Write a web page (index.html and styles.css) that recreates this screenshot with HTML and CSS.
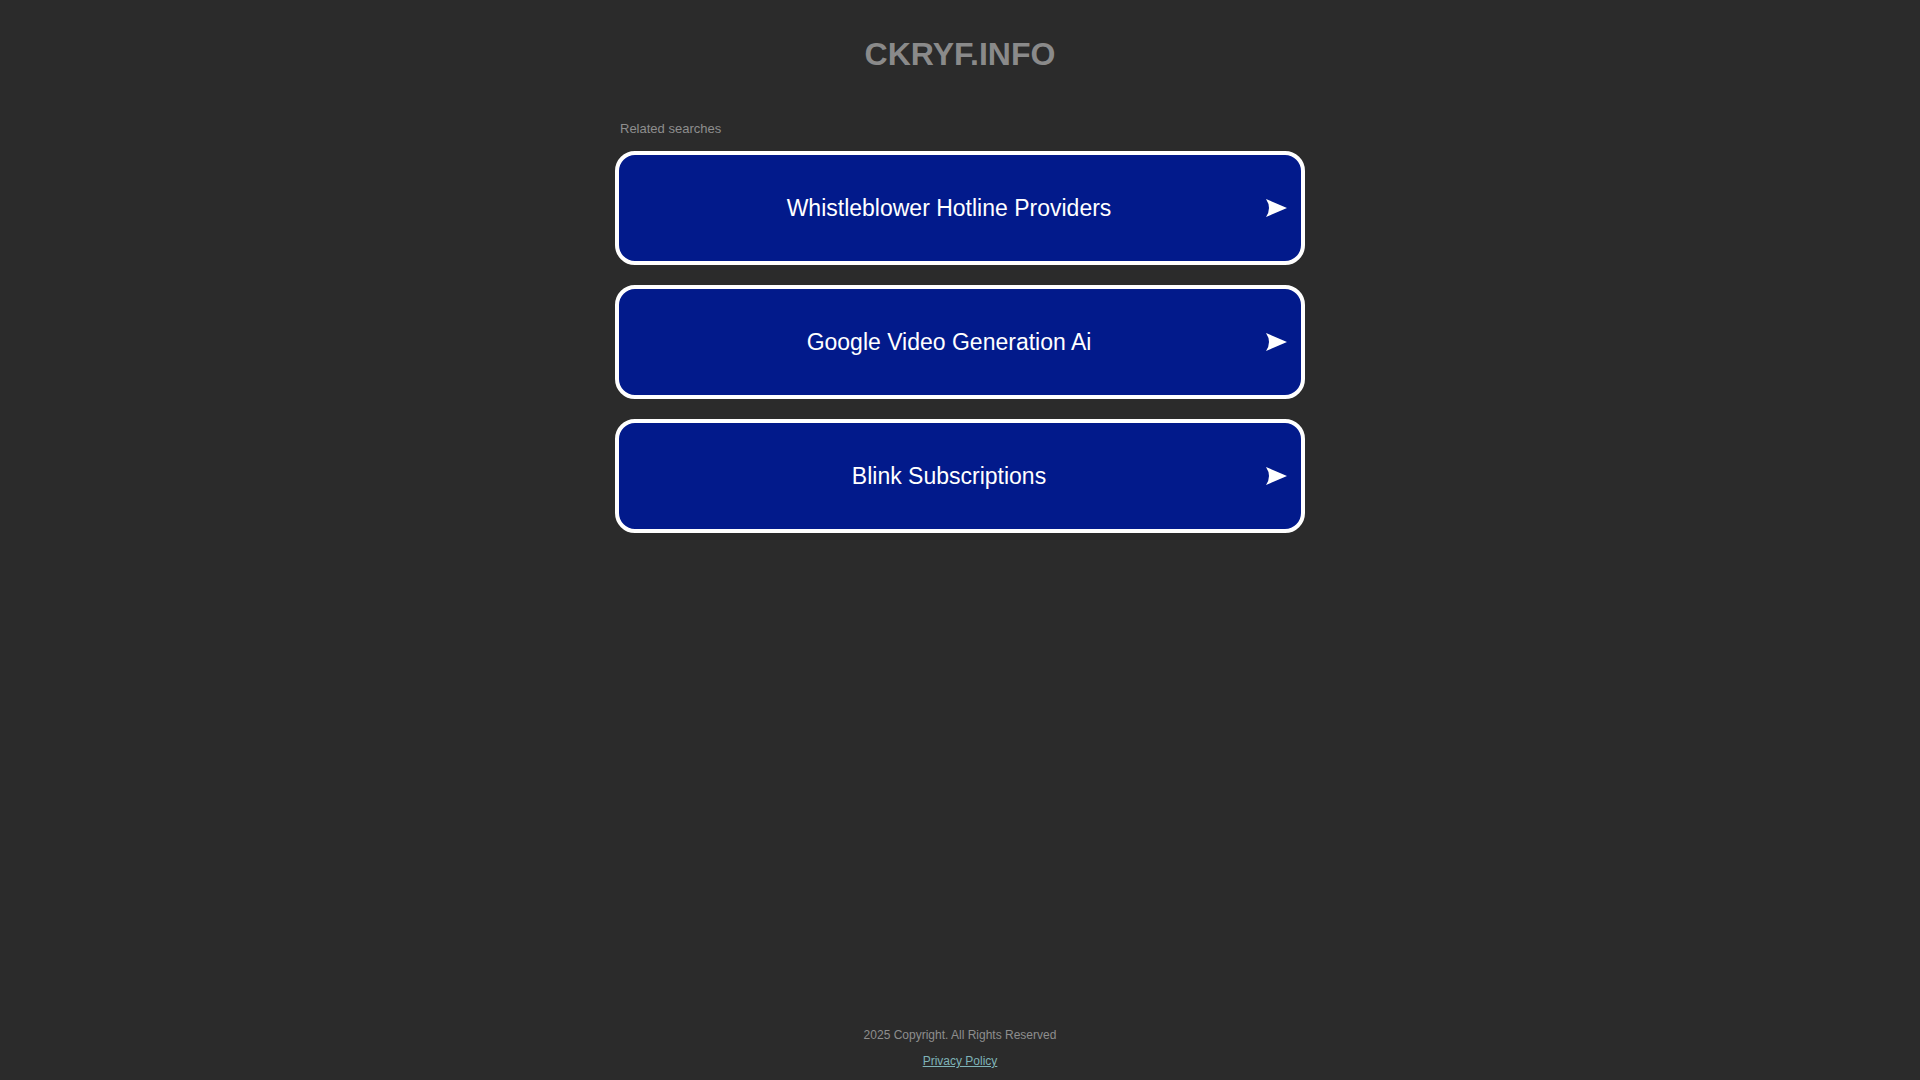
FILE: index.html
```html
<!DOCTYPE html>
<html lang="en">
<head>
<meta charset="utf-8">
<title>ckryf.info</title>
<link rel="stylesheet" href="styles.css">
</head>
<body>
<div class="page">
  <main class="main">
    <h1 class="domain">CKRYF.INFO</h1>
    <div class="related">
      <p class="related-title">Related searches</p>
      <ul class="links">
        <li><a class="link" href="#"><span class="link-text">Whistleblower Hotline Providers</span><svg class="arrow" viewBox="0 0 21 18" width="21" height="18"><path d="M0 0 L21 9 L0 18 Q6 9 0 0 Z" fill="#fff"/></svg></a></li>
        <li><a class="link" href="#"><span class="link-text">Google Video Generation Ai</span><svg class="arrow" viewBox="0 0 21 18" width="21" height="18"><path d="M0 0 L21 9 L0 18 Q6 9 0 0 Z" fill="#fff"/></svg></a></li>
        <li><a class="link" href="#"><span class="link-text">Blink Subscriptions</span><svg class="arrow" viewBox="0 0 21 18" width="21" height="18"><path d="M0 0 L21 9 L0 18 Q6 9 0 0 Z" fill="#fff"/></svg></a></li>
      </ul>
    </div>
  </main>
  <footer class="footer">
    <p class="copyright">2025 Copyright. All Rights Reserved</p>
    <a class="privacy" href="#">Privacy Policy</a>
  </footer>
</div>
</body>
</html>
```
FILE: styles.css
```css
html, body {
  margin: 0;
  padding: 0;
  background: #2b2b2b;
  font-family: "Liberation Sans", Arial, sans-serif;
}

.page {
  min-height: 100vh;
  display: flex;
  flex-direction: column;
  align-items: center;
}

.main {
  width: 690px;
  flex: 1;
  display: flex;
  flex-direction: column;
}

.domain {
  margin: 0;
  padding-top: 36px;
  font-size: 32px;
  line-height: 36px;
  font-weight: bold;
  color: #8a8a8a;
  text-align: center;
}

.related {
  margin-top: 49px;
}

.related-title {
  margin: 0 0 15px;
  padding-left: 5px;
  font-size: 13px;
  line-height: 15px;
  color: #8e8e8e;
}

.links {
  list-style: none;
  margin: 0;
  padding: 0;
  display: flex;
  flex-direction: column;
  gap: 20px;
}

.link {
  box-sizing: border-box;
  height: 114px;
  display: flex;
  align-items: center;
  padding: 0 14px 0 13px;
  background: #021a8b;
  border: 4px solid #fff;
  border-radius: 20px;
  text-decoration: none;
  color: #fff;
}

.link-text {
  flex: 1;
  text-align: center;
  font-size: 23px;
  line-height: 28px;
}

.arrow {
  flex: none;
  display: block;
}

.footer {
  display: flex;
  flex-direction: column;
  align-items: center;
  padding-bottom: 12px;
}

.copyright {
  margin: 0 0 12px;
  font-size: 12px;
  line-height: 14px;
  color: #8e8e8e;
}

.privacy {
  font-size: 12px;
  line-height: 14px;
  color: #7fb3b8;
}
```
